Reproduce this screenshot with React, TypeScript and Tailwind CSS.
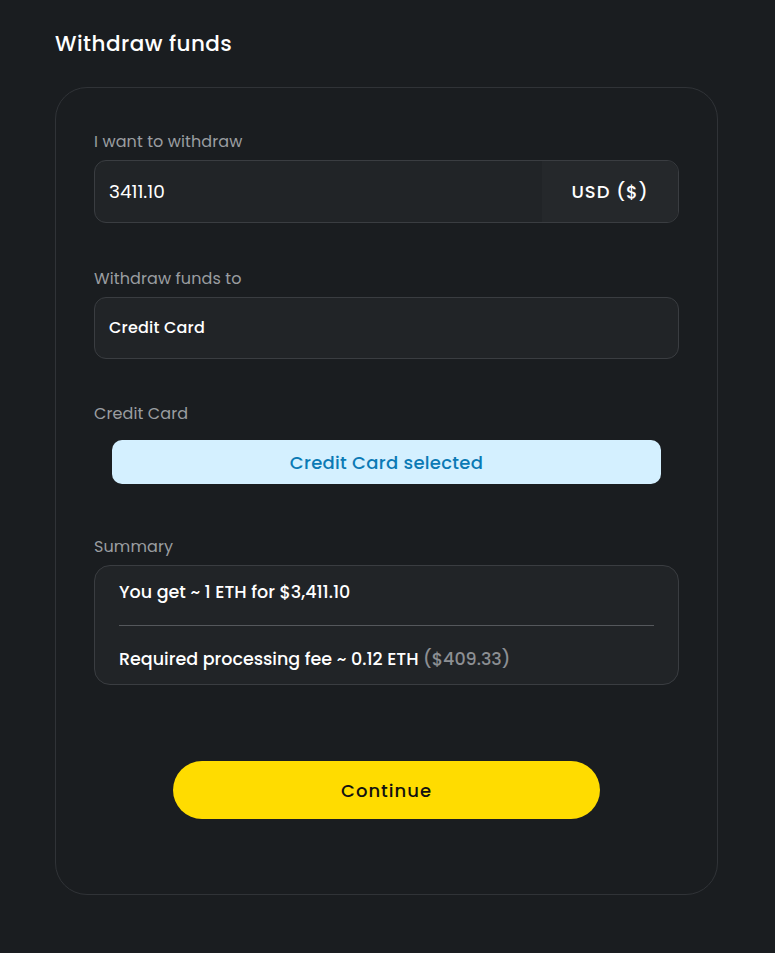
import React from "react";

export default function App() {
  const font = { fontFamily: "Poppins, Inter, 'Noto Sans', sans-serif" };
  return (
    <div className="min-h-[953px] w-full bg-[#1a1d20] text-white" style={font}>
      <div className="px-[55px] pt-[29px]">
        <h1 className="text-[21.5px] leading-[30px] font-medium tracking-[0.45px] text-white">Withdraw funds</h1>
        <div className="mt-[28px] w-[663px] h-[808px] rounded-[32px] border border-[#303337] px-[38px] pt-[41px]">
          <div className="text-[16px] leading-[26px] tracking-[0.1px] text-[#9a9da1]">I want to withdraw</div>
          <div className="mt-[5px] flex h-[63px] overflow-hidden rounded-[12px] border border-[#3a3d41] bg-[#212427]">
            <div className="flex flex-1 items-center pl-[14px] text-[18.5px] text-white">3411.10</div>
            <div className="flex w-[136px] items-center justify-center bg-[#25282b] text-[18px] font-medium tracking-[1px] text-white">USD ($)</div>
          </div>

          <div className="mt-[43px] text-[16px] leading-[26px] tracking-[0.1px] text-[#9a9da1]">Withdraw funds to</div>
          <div className="mt-[5px] flex h-[62px] items-center rounded-[12px] border border-[#3a3d41] bg-[#212427] pl-[14px] text-[16px] font-medium tracking-[0.2px] text-white">
            Credit Card
          </div>

          <div className="mt-[42px] text-[16px] leading-[26px] tracking-[0.1px] text-[#9a9da1]">Credit Card</div>
          <div className="mx-[18px] mt-[13px] flex h-[44px] items-center justify-center rounded-[10px] bg-[#d4f0ff] text-[18px] font-medium tracking-[0.3px] text-[#0b7ab5]">
            Credit Card selected
          </div>

          <div className="mt-[50px] text-[16px] leading-[26px] tracking-[0.1px] text-[#9a9da1]">Summary</div>
          <div className="mt-[5px] rounded-[16px] border border-[#3a3d41] bg-[#212427] px-[24px] pt-[14px] pb-[13px]">
            <div className="text-[17.5px] leading-[24px] font-medium text-white">You get ~ 1 ETH for $3,411.10</div>
            <div className="my-[21px] h-px bg-[#55585c]" />
            <div className="text-[17.5px] leading-[24px] font-medium text-white">
              Required processing fee ~ 0.12 ETH <span className="text-[#8c8f93]">($409.33)</span>
            </div>
          </div>

          <div className="mt-[76px] flex justify-center">
            <button className="h-[58px] w-[427px] rounded-full bg-[#ffdc00] text-[18px] font-medium tracking-[1px] text-[#111]">
              Continue
            </button>
          </div>
        </div>
      </div>
    </div>
  );
}
